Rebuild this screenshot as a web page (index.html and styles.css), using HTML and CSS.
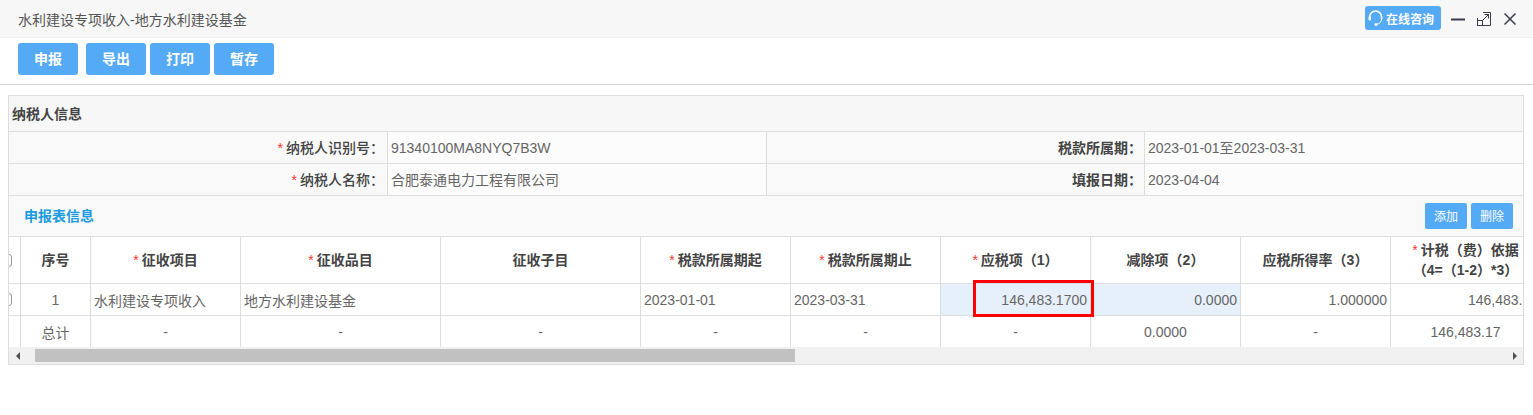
FILE: index.html
```html
<!DOCTYPE html>
<html lang="zh-CN">
<head>
  <meta charset="UTF-8" />
  <title>水利建设专项收入-地方水利建设基金</title>
  <link rel="stylesheet" href="styles.css">
</head>
<body>

  <div class="title-bar">
    <span class="title-text">水利建设专项收入-地方水利建设基金</span>
    <div class="title-tools">
      <a class="consult">
        <svg class="consult-icon" width="18" height="18" viewBox="0 0 18 18" fill="none" stroke="#fff" stroke-width="1.6">
          <path d="M1.6 10V8a6 6 0 0 1 12 0v2" />
          <path d="M13.6 10c0 2.6-2.2 5-5 5.4" stroke-width="1" />
          <rect x="0.6" y="7.6" width="2.4" height="4" rx="1.1" fill="#fff" stroke="none" />
          <circle cx="8" cy="15.4" r="1.5" fill="#fff" stroke="none" />
        </svg>
        在线咨询
      </a>
      <svg class="win-icon" width="14" height="14" viewBox="0 0 14 14" stroke="#3b3b4a" stroke-width="2" fill="none">
        <path d="M0 7.5h14" />
      </svg>
      <svg class="win-icon win-max" width="14" height="14" viewBox="0 0 14 14" stroke="#3b3b4a" stroke-width="1" fill="none">
        <path d="M6 0.5H13.5V13.5H0.5V6" />
        <rect x="0.5" y="8.5" width="5" height="5" />
        <path d="M5.5 8.5L11.5 2.5M7.5 2.5H11.5V6.5" />
      </svg>
      <svg class="win-icon win-close" width="12" height="12" viewBox="0 0 12 12" stroke="#3b3b4a" stroke-width="1.5" fill="none">
        <path d="M0.5 0.5L11.5 11.5M11.5 0.5L0.5 11.5" />
      </svg>
    </div>
  </div>

  <div class="toolbar">
    <button class="btn">申报</button>
    <button class="btn btn-gap">导出</button>
    <button class="btn">打印</button>
    <button class="btn">暂存</button>
  </div>

  <div class="panel">
    <div class="panel-head">纳税人信息</div>

    <div class="info-row">
      <div class="info-label"><i class="req">*</i>纳税人识别号：</div>
      <div class="info-value">91340100MA8NYQ7B3W</div>
      <div class="info-label narrow">税款所属期：</div>
      <div class="info-value narrow last">2023-01-01至2023-03-31</div>
    </div>
    <div class="info-row">
      <div class="info-label"><i class="req">*</i>纳税人名称：</div>
      <div class="info-value">合肥泰通电力工程有限公司</div>
      <div class="info-label narrow">填报日期：</div>
      <div class="info-value narrow last">2023-04-04</div>
    </div>

    <div class="section-head">
      <span class="section-title">申报表信息</span>
      <div class="section-btns">
        <button class="btn-small">添加</button>
        <button class="btn-small">删除</button>
      </div>
    </div>

    <div class="table-wrap">
      <table class="grid">
        <colgroup>
          <col class="c-check"><col class="c-no"><col class="c-150"><col class="c-200"><col class="c-200">
          <col class="c-150"><col class="c-150"><col class="c-150"><col class="c-150"><col class="c-150"><col class="c-150">
        </colgroup>
        <thead>
          <tr>
            <th><span class="check"></span></th>
            <th>序号</th>
            <th><i class="req">*</i>征收项目</th>
            <th><i class="req">*</i>征收品目</th>
            <th>征收子目</th>
            <th><i class="req">*</i>税款所属期起</th>
            <th><i class="req">*</i>税款所属期止</th>
            <th><i class="req">*</i>应税项（1）</th>
            <th>减除项（2）</th>
            <th>应税所得率（3）</th>
            <th><i class="req">*</i>计税（费）依据<br>（4=（1-2）*3）</th>
          </tr>
        </thead>
        <tbody>
          <tr>
            <td><span class="check"></span></td>
            <td class="mid">1</td>
            <td>水利建设专项收入</td>
            <td>地方水利建设基金</td>
            <td></td>
            <td>2023-01-01</td>
            <td>2023-03-31</td>
            <td class="num edit">146,483.1700</td>
            <td class="num edit">0.0000</td>
            <td class="num">1.000000</td>
            <td class="num-over">146,483.1700</td>
          </tr>
          <tr class="total">
            <td></td>
            <td class="mid">总计</td>
            <td class="mid">-</td>
            <td class="mid">-</td>
            <td class="mid">-</td>
            <td class="mid">-</td>
            <td class="mid">-</td>
            <td class="mid">-</td>
            <td class="mid">0.0000</td>
            <td class="mid">-</td>
            <td class="mid">146,483.17</td>
          </tr>
        </tbody>
      </table>
      <div class="mark-box"></div>
    </div>

    <div class="scrollbar">
      <span class="arrow"><span class="tri-left"></span></span>
      <div class="track"><div class="thumb"></div></div>
      <span class="arrow"><span class="tri-right"></span></span>
    </div>
  </div>

</body>
</html>
```

FILE: styles.css
```css
* { box-sizing: border-box; }
body { margin: 0; background: #fff; color: #666; font-family: "Liberation Sans", "Noto Sans CJK SC", sans-serif; font-size: 14px; }

.title-bar { height: 38px; padding: 0 17px 0 18px; display: flex; align-items: center; justify-content: space-between; background: #f7f7f7; border-bottom: 1px solid #eee; }
.title-text { color: #555; }
.title-tools { display: flex; align-items: center; }
.consult { width: 76px; height: 24px; margin-right: 10px; margin-top: -1px; display: flex; align-items: center; padding-left: 3px; background: #55aaf5; border-radius: 3px; color: #fff; font-size: 12px; font-weight: bold; }
.win-icon { display: block; margin-right: 12px; }
.win-max { margin-right: 13px; }
.win-close { margin-right: 0; }

.toolbar { height: 47px; padding: 5px 18px 0; display: flex; align-items: flex-start; gap: 4px; border-bottom: 1px solid #d4d4d4; }
.btn { width: 60px; height: 32px; padding: 0 0 2px; background: #55aaf5; color: #fff; border: none; border-radius: 3px; font: bold 14px "Liberation Sans", "Noto Sans CJK SC", sans-serif; }
.btn-gap { margin-left: 4px; }

.panel { width: 1516px; margin: 10px 0 0 8px; border: 1px solid #ddd; background: #f9f9f9; }
.panel-head { height: 36px; padding-left: 3px; line-height: 36px; background: #f7f7f7; border-bottom: 1px solid #ddd; color: #444; font-weight: bold; }

.info-row { display: flex; height: 32px; padding-top: 0; border-bottom: 1px solid #ddd; }
.info-label { width: 379px; padding: 1px 3px 0 0; line-height: 31px; text-align: right; color: #444; border-right: 1px solid #ddd; font-weight: 500; }
.info-value { width: 379px; padding: 1px 0 0 3px; line-height: 31px; background: #fcfcfc; border-right: 1px solid #ddd; }
.info-label.narrow, .info-value.narrow { width: 378px; }
.info-label.narrow { padding-right: 2px; font-weight: bold; }
.info-value.last { border-right: none; }
.req { margin-right: 3px; color: #f33; font-style: normal; font-weight: normal; }

.section-head { height: 41px; padding: 7px 10px 0 15px; display: flex; justify-content: space-between; align-items: flex-start; border-bottom: 1px solid #ddd; }
.section-title { line-height: 26px; color: #1a9ae0; font-weight: bold; }
.section-btns { display: flex; gap: 4px; }
.btn-small { width: 42px; height: 26px; padding: 0 0 2px; background: #55aaf5; color: #fff; border: none; border-radius: 2px; font: 12px "Liberation Sans", "Noto Sans CJK SC", sans-serif; }

.table-wrap { position: relative; height: 110px; overflow: hidden; background: #fff; }
.grid { width: 1552px; margin-left: -20px; table-layout: fixed; border-collapse: separate; border-spacing: 0; }
.c-check { width: 32px; }
.c-no { width: 70px; }
.c-150 { width: 150px; }
.c-200 { width: 200px; }
.grid th, .grid td { padding: 0 3px; border-right: 1px solid #ddd; border-bottom: 1px solid #ddd; white-space: nowrap; overflow: hidden; }
.grid th { height: 47px; line-height: 20px; text-align: center; color: #444; font-weight: bold; }
.grid td { height: 32px; }
.grid .total td { height: 31px; border-bottom: none; }
.mid { text-align: center; }
.num { text-align: right; }
.grid .num-over { padding-left: 77px; }
.edit { background: #e6f0fa; }
.check { display: block; width: 13px; height: 13px; margin-left: 7px; border: 1px solid #999; border-radius: 3px; background: #fff; }
.mark-box { position: absolute; left: 964px; top: 43px; width: 121px; height: 37px; border: 3px solid #f00; }

.scrollbar { height: 17px; display: flex; background: #f1f1f1; }
.arrow { width: 17px; display: flex; align-items: center; justify-content: center; }
.tri-left { border: 4px solid transparent; border-left: none; border-right: 4px solid #505050; }
.tri-right { border: 4px solid transparent; border-right: none; border-left: 4px solid #505050; }
.track { flex: 1; padding: 2px 0 2px 9px; }
.thumb { width: 760px; height: 13px; background: #c1c1c1; }
```
